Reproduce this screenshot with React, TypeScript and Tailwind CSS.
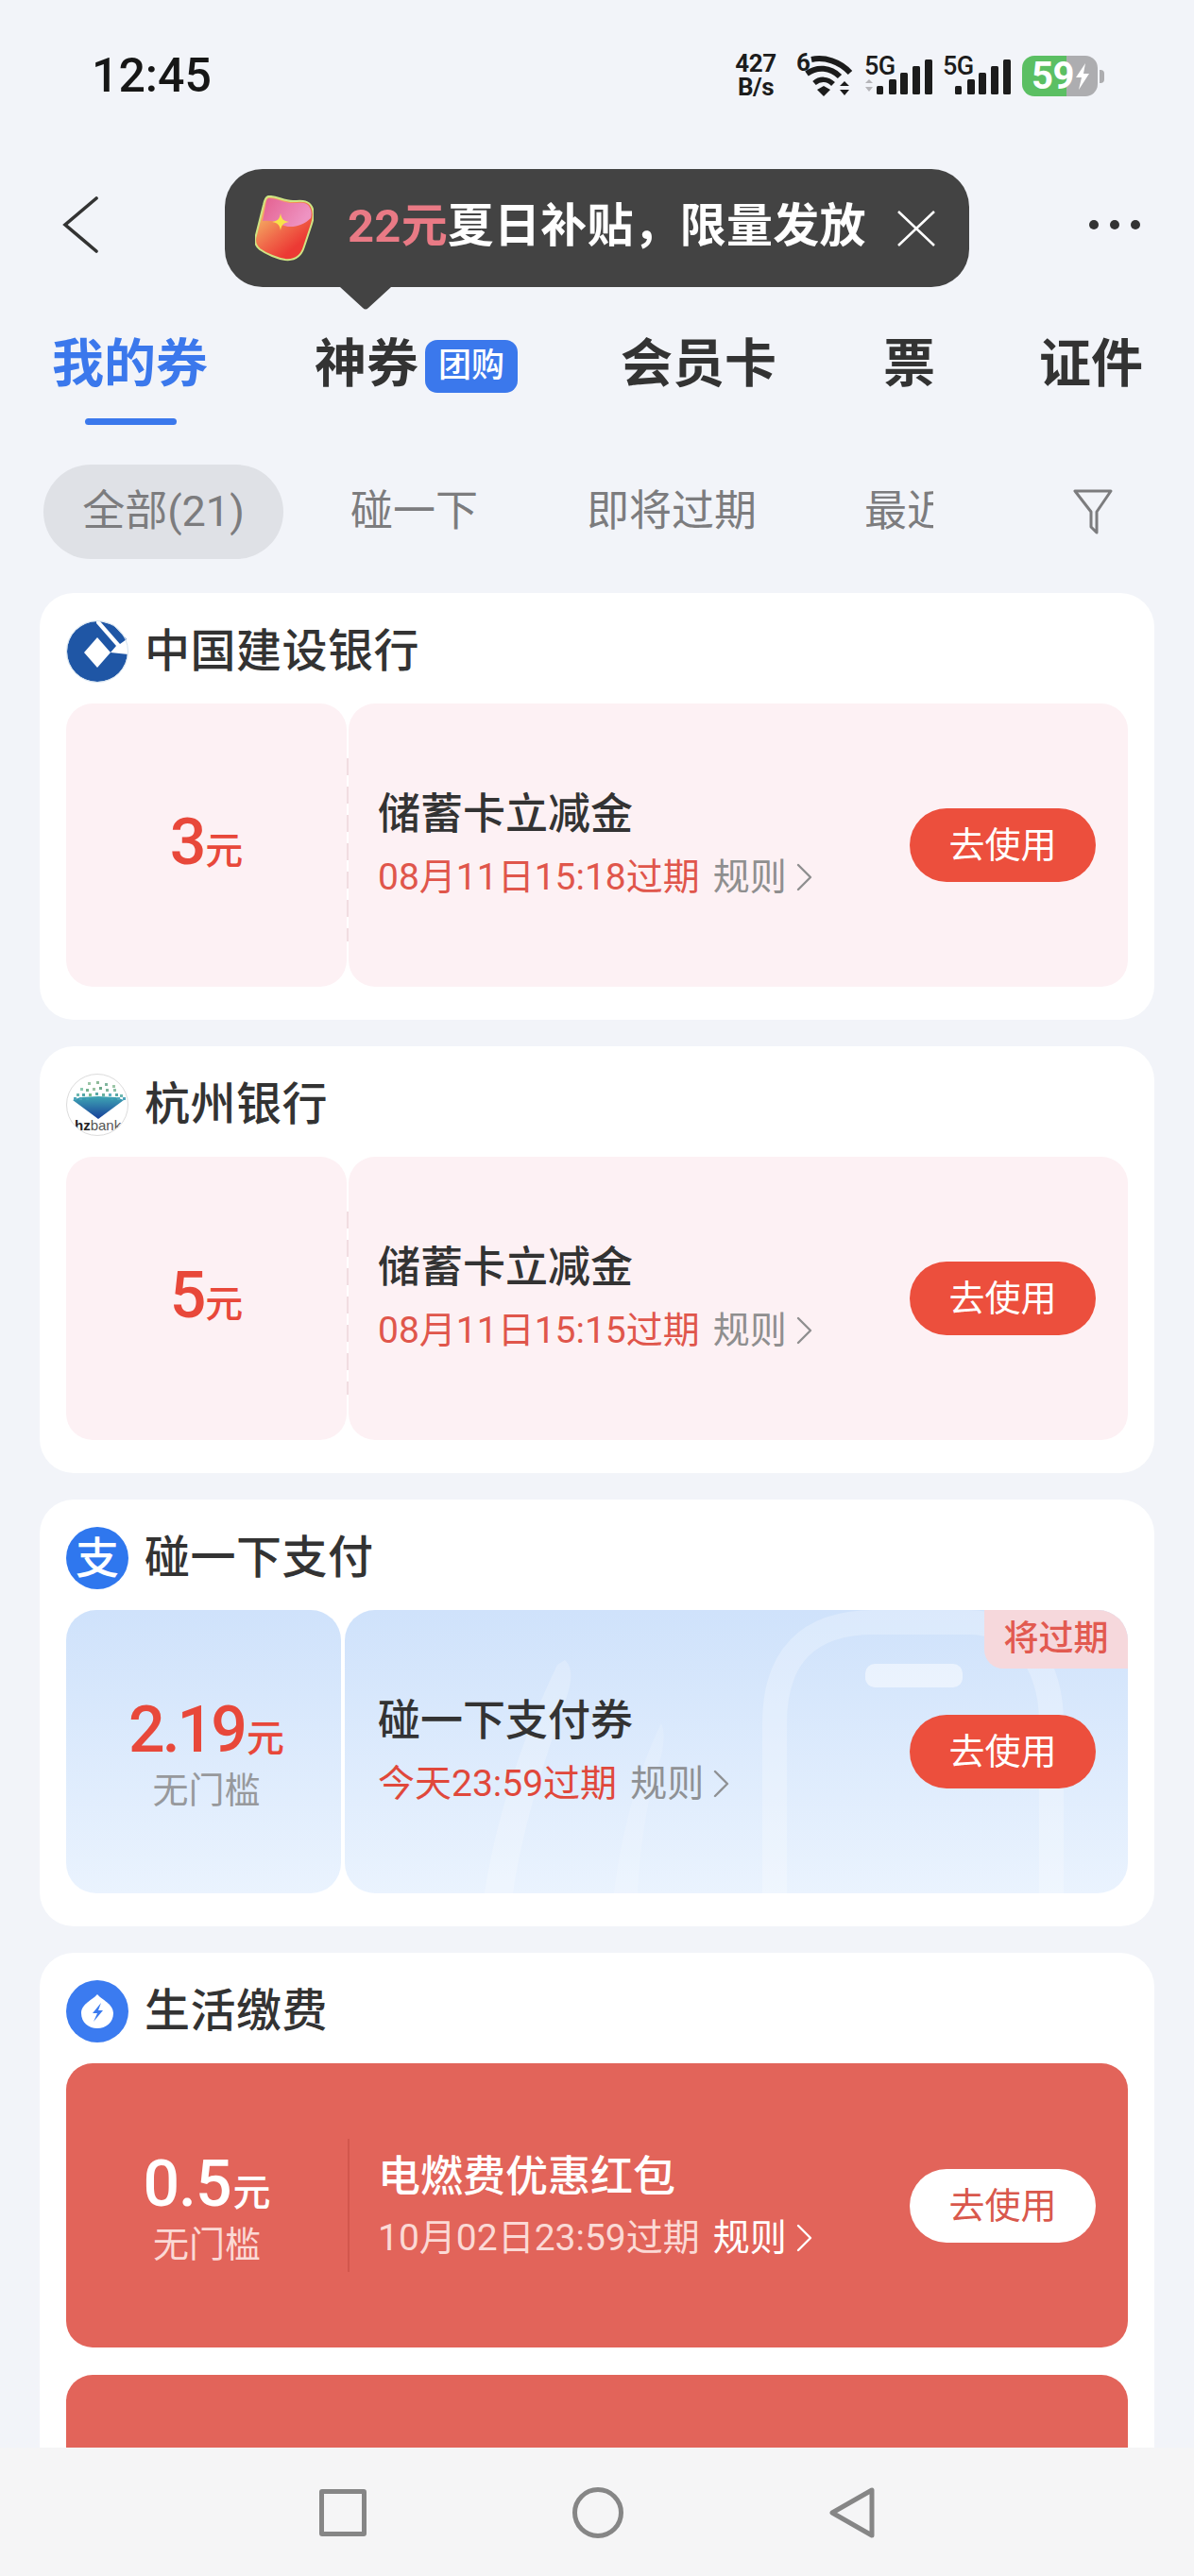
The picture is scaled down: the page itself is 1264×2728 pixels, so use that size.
import React from "react";

const FONT = "font-['Roboto','Noto_Sans_CJK_SC',sans-serif]";

function Chevron({ className }: { className: string }) {
  return (
    <svg viewBox="0 0 20 30" className={className} fill="none" stroke="currentColor" strokeWidth="2.4" strokeLinecap="round" strokeLinejoin="round">
      <path d="M4 2 L17 15 L4 28" />
    </svg>
  );
}

function Bars({ arrows }: { arrows?: boolean }) {
  return (
    <div className="relative w-[72px] h-[44px]">
      <span className="absolute left-0 top-[-2px] text-[27px] leading-[27px] font-medium text-[#1c1c1c] tracking-[-0.5px]">5G</span>
      <svg viewBox="0 0 72 44" className="absolute inset-0 w-[72px] h-[44px]">
        {arrows && <path d="M1 29 L5 25 L9 29 Z M1 33 L9 33 L5 38 Z" fill="#b5b5b9" />}
        <rect x="13" y="32" width="7" height="9" rx="1.5" fill="#1c1c1c" />
        <rect x="26" y="25" width="8" height="16" rx="1.5" fill="#1c1c1c" />
        <rect x="38" y="18" width="8" height="23" rx="1.5" fill="#1c1c1c" />
        <rect x="51" y="11" width="8" height="30" rx="1.5" fill="#1c1c1c" />
        <rect x="64" y="4" width="8" height="37" rx="1.5" fill="#1c1c1c" />
      </svg>
    </div>
  );
}

function StatusBar() {
  return (
    <div className="h-[160px] flex items-center justify-between pl-[97px] pr-[94px]">
      <span className="text-[50px] leading-[50px] font-medium text-[#161616]">12:45</span>
      <div className="flex items-center">
        <div className="flex flex-col items-center w-[50px] text-[#1c1c1c] font-bold text-[26px] leading-[25px] tracking-[-0.5px]">
          <span>427</span>
          <span>B/s</span>
        </div>
        <div className="relative w-[60px] h-[46px] ml-[18px]">
          <span className="absolute left-0 top-[-5px] text-[26px] leading-[28px] font-bold text-[#1c1c1c]">6</span>
          <svg viewBox="0 0 60 46" className="absolute inset-0 w-[60px] h-[46px]" fill="none">
            <path d="M16 6 C30 3 46 8 57 20" stroke="#1c1c1c" strokeWidth="6" />
            <path d="M11 21 C22 13 36 14 46 24" stroke="#1c1c1c" strokeWidth="6" />
            <path d="M19 31 C25 26 33 26 39 32" stroke="#1c1c1c" strokeWidth="5.5" />
            <path d="M22 38 L29 34 L36 38 L29 45 Z" fill="#1c1c1c" />
            <path d="M46 34 L51 29 L56 34 Z M46 38 L56 38 L51 44 Z" fill="#1c1c1c" />
          </svg>
        </div>
        <div className="ml-[12px] mt-[2px]"><Bars arrows /></div>
        <div className="ml-[11px] mt-[2px]"><Bars /></div>
        <div className="relative ml-[12px] w-[88px] h-[43px]">
          <div className="flex w-[80px] h-[43px] rounded-[13px] overflow-hidden">
            <div className="w-[47px] bg-[#5bbf63]" />
            <div className="flex-1 bg-[#adadb0]" />
          </div>
          <span className="absolute left-[10px] top-[-1px] text-[40px] leading-[45px] font-bold text-white tracking-[-0.5px]">59</span>
          <svg viewBox="0 0 20 30" className="absolute left-[54px] top-[7px] w-[20px] h-[30px]">
            <path d="M13 1 L3 16 L9 16 L6 29 L17 12 L11 12 Z" fill="#fff" />
          </svg>
          <div className="absolute left-[82px] top-[15px] w-[5px] h-[14px] rounded-r-[4px] bg-[#adadb0]" />
        </div>
      </div>
    </div>
  );
}

function RedPacket() {
  return (
    <svg viewBox="0 0 62 70" className="w-[62px] h-[70px] shrink-0">
      <defs>
        <linearGradient id="rpBody" x1="0.1" y1="0.3" x2="0.55" y2="0.9">
          <stop offset="0" stopColor="#f4ad62" />
          <stop offset="0.55" stopColor="#f0694a" />
          <stop offset="1" stopColor="#ec3a34" />
        </linearGradient>
        <linearGradient id="rpFlap" x1="0" y1="0" x2="1" y2="0.4">
          <stop offset="0" stopColor="#e4608f" />
          <stop offset="1" stopColor="#ee93c2" />
        </linearGradient>
      </defs>
      <path d="M14 1 C22 0 30 6 40 6 C48 6 56 4 60 12 C63 18 62 24 60 30 L52 54 C49 64 42 69 32 68 C24 67 12 62 5 57 C0 53 -1 48 1 42 L9 10 C10 5 11 2 14 1 Z" fill="url(#rpBody)" stroke="#cfe584" strokeWidth="2" />
      <path d="M14 3 C22 2 30 8 40 8 C48 8 55 6 58 13 C60 17 60 20 59 24 C50 33 35 36 27 30 C22 28 17 26 8 27 L11 11 C12 6 12 4 14 3 Z" fill="url(#rpFlap)" />
      <path d="M27 19 C28 25 30 27 36 28 C30 29 28 31 27 37 C26 31 24 29 18 28 C24 27 26 25 27 19 Z" fill="#f8e34a" />
    </svg>
  );
}

function Tooltip() {
  return (
    <div className="absolute left-[238px] top-[179px] z-10 w-[788px] h-[125px] rounded-[40px] bg-[#434343] flex items-center pl-[32px]">
      <RedPacket />
      <span className="ml-[36px] text-[49px] leading-[60px] font-bold whitespace-nowrap text-white mt-[-4px] tracking-[0.2px]">
        <span className="text-[#e97a85]">22元</span>夏日补贴，限量发放
      </span>
      <svg viewBox="0 0 40 38" className="absolute left-[712px] top-[44px] w-[40px] h-[38px]" stroke="#fff" strokeWidth="2.6" fill="none">
        <path d="M1 1 L39 37 M39 1 L1 37" />
      </svg>
      <svg viewBox="0 0 54 24" className="absolute left-[122px] top-[125px] w-[54px] h-[24px]">
        <path d="M0 0 H54 L30 22 Q27 25 24 22 Z" fill="#434343" />
      </svg>
    </div>
  );
}

function NavBar() {
  return (
    <div className="h-[156px] flex items-center justify-between pl-[66px] pr-[57px]">
      <svg viewBox="0 0 38 60" className="w-[38px] h-[60px] text-[#333]" fill="none" stroke="currentColor" strokeWidth="3.6" strokeLinecap="round">
        <path d="M36 2 L3 30 L36 58" />
      </svg>
      <div className="flex gap-[12px]">
        <div className="w-[10px] h-[10px] rounded-full bg-[#333]" />
        <div className="w-[10px] h-[10px] rounded-full bg-[#333]" />
        <div className="w-[10px] h-[10px] rounded-full bg-[#333]" />
      </div>
    </div>
  );
}

function Tabs() {
  return (
    <div className="h-[176px] flex pl-[55px] pt-[39px] text-[55px] leading-[60px] font-bold text-[#333]">
      <div className="relative w-[166px] whitespace-nowrap text-[#3b78ec]">
        我的券
        <div className="absolute left-[35px] top-[88px] w-[97px] h-[7px] rounded-full bg-[#3b78ec]" />
      </div>
      <div className="ml-[112px] w-[110px] whitespace-nowrap">神券</div>
      <div className="ml-[7px] mt-[5px] w-[98px] h-[56px] rounded-[13px] bg-[#3b78ec] text-white text-[35px] leading-[56px] font-medium text-center">团购</div>
      <div className="ml-[109px] whitespace-nowrap">会员卡</div>
      <div className="ml-[113px] whitespace-nowrap">票</div>
      <div className="ml-[110px] whitespace-nowrap">证件</div>
    </div>
  );
}

function Filters() {
  return (
    <div className="h-[100px] shrink-0 flex items-center pl-[46px] text-[45px] leading-[60px] text-[#7c7c7e]">
      <div className="w-[254px] h-[100px] rounded-full bg-[#dfe1e6] flex items-center justify-center whitespace-nowrap">全部(21)</div>
      <div className="ml-[71px] whitespace-nowrap">碰一下</div>
      <div className="ml-[115px] whitespace-nowrap">即将过期</div>
      <div className="ml-[114px] w-[73px] overflow-hidden whitespace-nowrap">最近</div>
      <svg viewBox="0 0 42 50" className="ml-[148px] w-[42px] h-[50px]" fill="none" stroke="#7c7c7e" strokeWidth="3" strokeLinejoin="round">
        <path d="M2 3 H40 L25 25 V47 L19 41 V25 Z" />
      </svg>
    </div>
  );
}

function CcbLogo() {
  return (
    <svg viewBox="0 0 66 66" className="w-[66px] h-[66px] shrink-0">
      <circle cx="33" cy="33" r="32" fill="#1f56a5" />
      <path d="M32 3 L53 27 L47 34 L66 36 L66 0 L32 0 Z" fill="#fff" />
      <path d="M36 1 L50 5 L64 20 L57 25 Z" fill="#1f56a5" />
      <path d="M33 18 L47 34 L33 50 L19 34 Z" fill="#fff" />
      <circle cx="33" cy="33" r="32.5" fill="none" stroke="#d5e3ef" strokeWidth="1" />
    </svg>
  );
}

function HzLogo() {
  const dots = [
    [22, 8, "#9cc7a8"], [31, 7, "#8fbb9a"], [40, 9, "#7fb59d"], [48, 11, "#9cc7a8"],
    [14, 14, "#8cc9b0"], [20, 15, "#76b08f"], [27, 14, "#9bc2a2"], [34, 13, "#6ea98a"], [41, 15, "#7fb59d"], [49, 15, "#8dc0a8"],
    [10, 20, "#6cb6b0"], [16, 20, "#54a7a8"], [23, 20, "#79b98f"], [30, 19, "#5aa9a5"], [37, 20, "#6ab0a0"], [44, 20, "#5eb1c0"], [51, 20, "#5aa9a5"], [56, 21, "#6cb6b0"],
    [7, 24, "#4ea5bb"], [13, 24, "#4ea5bb"], [20, 24, "#3f9fb5"], [46, 24, "#3f9fb5"], [53, 24, "#4ea5bb"], [59, 24, "#4ea5bb"],
  ] as const;
  return (
    <div className="relative w-[66px] h-[66px] shrink-0 rounded-full bg-white border border-[#dcdcdc] overflow-hidden">
      <svg viewBox="0 0 66 66" className="absolute inset-0 w-[66px] h-[66px]">
        <defs>
          <linearGradient id="hzG" x1="0" y1="0" x2="0" y2="1">
            <stop offset="0" stopColor="#3fa6b4" />
            <stop offset="1" stopColor="#173f9a" />
          </linearGradient>
        </defs>
        <path d="M6 27 L14 24 L33 23 L52 24 L60 27 L33 47 Z" fill="url(#hzG)" />
        {dots.map(([x, y, c], i) => (
          <rect key={i} x={x} y={y} width="3" height="3" fill={c} />
        ))}
      </svg>
      <span className="absolute left-[8px] top-[45px] font-['Liberation_Sans',sans-serif] text-[15px] leading-[17px] whitespace-nowrap text-[#222]">
        <span className="font-bold">hz</span><span className="text-[#555]">bank</span>
      </span>
    </div>
  );
}

function PayLogo() {
  return (
    <div className="w-[66px] h-[66px] shrink-0 rounded-full bg-[#2f77ee] flex items-center justify-center text-white text-[46px] leading-[60px] font-medium">支</div>
  );
}

function LifeLogo() {
  return (
    <svg viewBox="0 0 66 66" className="w-[66px] h-[66px] shrink-0">
      <circle cx="33" cy="33" r="33" fill="#3b7bf0" />
      <path d="M33 15 C38 21 50 25 50 35 C50 45 42 51 33 51 C24 51 16 45 16 35 C16 25 28 21 33 15 Z" fill="#fff" />
      <path d="M37 24 L28 35 L33 35 L29 44 L39 32 L34 32 Z" fill="#3b7bf0" />
    </svg>
  );
}

function Amount({ value, note, valueClass, unitClass, noteClass }: { value: string; note?: string; valueClass: string; unitClass: string; noteClass?: string }) {
  return (
    <div className={`flex flex-col items-center ${note ? "mt-[3px]" : "mt-[-6px]"}`}>
      <div className="flex items-baseline whitespace-nowrap">
        <span className={`text-[68px] leading-[76px] font-medium ${valueClass}`}>{value}</span>
        <span className={`text-[40px] leading-[50px] font-medium ml-[2px] ${unitClass}`}>元</span>
      </div>
      {note && <span className={`text-[38px] leading-[46px] mt-[3px] ${noteClass}`}>{note}</span>}
    </div>
  );
}

function Info({ title, date, titleClass, dateClass, ruleClass }: { title: string; date: string; titleClass: string; dateClass: string; ruleClass: string }) {
  return (
    <div className="flex-1 min-w-0 mt-[-5px]">
      <div className={`text-[45px] leading-[60px] font-medium ${titleClass}`}>{title}</div>
      <div className="mt-[12px] flex items-center text-[39px] leading-[48px] whitespace-nowrap">
        <span className={dateClass}>{date}</span>
        <span className={`ml-[14px] ${ruleClass}`}>规则</span>
        <Chevron className={`ml-[8px] w-[20px] h-[30px] ${ruleClass}`} />
      </div>
    </div>
  );
}

function UseButton({ light }: { light?: boolean }) {
  return (
    <div className={`w-[197px] h-[78px] shrink-0 rounded-full flex items-center justify-center text-[38px] leading-[50px] ${light ? "bg-white text-[#d9584c]" : "bg-[#ec4f3d] text-white"}`}>去使用</div>
  );
}

function PinkCoupon({ amount, date }: { amount: string; date: string }) {
  return (
    <div className="flex h-[300px] gap-[2px]">
      <div className="w-[297px] rounded-[28px] bg-[#fdf1f4] flex items-center justify-center">
        <Amount value={amount} valueClass="text-[#e8483a] tracking-[-3px]" unitClass="text-[#e8483a]" />
      </div>
      <div className="relative flex-1 rounded-[28px] bg-[#fdf1f4] flex items-center pl-[31px] pr-[34px]">
        <div className="absolute left-[-2px] top-[58px] w-[2px] h-[194px] bg-[repeating-linear-gradient(to_bottom,#f1dde1_0,#f1dde1_18px,transparent_18px,transparent_30px)]" />
        <Info title="储蓄卡立减金" date={date} titleClass="text-[#333]" dateClass="text-[#e0564b]" ruleClass="text-[#8f8f8f]" />
        <UseButton />
      </div>
    </div>
  );
}

function BlueCoupon() {
  return (
    <div className="flex h-[300px] gap-[4px]">
      <div className="w-[291px] pl-[6px] rounded-[32px] bg-gradient-to-b from-[#cfe2fb] to-[#eaf3fe] flex items-center justify-center">
        <Amount value="2.19" note="无门槛" valueClass="text-[#e8483a] tracking-[-3px]" unitClass="text-[#e8483a]" noteClass="text-[#97999c]" />
      </div>
      <div className="relative flex-1 overflow-hidden rounded-[32px] bg-gradient-to-b from-[#cfe2fb] to-[#eaf3fe] flex items-center pl-[35px] pr-[34px]">
        <svg viewBox="0 0 829 300" className="absolute inset-0 w-[829px] h-[300px]" fill="none">
          <path d="M455 300 V120 C455 50 490 13 560 13 H660 C710 13 748 50 748 120 V300" stroke="#fff" strokeOpacity="0.25" strokeWidth="26" />
          <rect x="551" y="57" width="103" height="25" rx="10" fill="#fff" fillOpacity="0.5" />
          <path d="M233 53 C243 62 240 80 232 100 C215 150 190 220 178 300 H148 C160 220 190 130 225 58 Z" fill="#fff" fillOpacity="0.22" />
          <path d="M335 120 C340 130 338 150 330 170 C318 210 312 260 310 300 H285 C292 240 310 170 335 120 Z" fill="#fff" fillOpacity="0.15" />
        </svg>
        <div className="relative flex-1 flex items-center">
          <Info title="碰一下支付券" date="今天23:59过期" titleClass="text-[#333]" dateClass="text-[#e0483b]" ruleClass="text-[#8f9194]" />
          <UseButton />
        </div>
        <div className="absolute right-0 top-0 w-[152px] h-[62px] rounded-bl-[20px] bg-[#f6d8dc] flex items-center justify-center text-[37px] leading-[50px] font-medium text-[#e25a50]">将过期</div>
      </div>
    </div>
  );
}

function RedCoupon() {
  return (
    <div className="flex items-center h-[301px] rounded-[28px] bg-[#e2645a]">
      <div className="w-[298px] flex justify-center">
        <Amount value="0.5" note="无门槛" valueClass="text-white tracking-[-1px]" unitClass="text-white" noteClass="text-[#fbd9d5]" />
      </div>
      <div className="w-[2px] h-[141px] bg-[#d2574d]" />
      <div className="flex-1 flex items-center pl-[30px] pr-[34px]">
        <div className="flex-1 min-w-0">
          <div className="text-[45px] leading-[56px] font-medium text-white">电燃费优惠红包</div>
          <div className="mt-[12px] flex items-center text-[39px] leading-[48px] whitespace-nowrap text-[#fbd9d5]">
            <span>10月02日23:59过期</span>
            <span className="ml-[14px] text-white">规则</span>
            <Chevron className="ml-[8px] w-[20px] h-[30px] text-white" />
          </div>
        </div>
        <UseButton light />
      </div>
    </div>
  );
}

function Card({ logo, name, children, tall }: { logo: React.ReactNode; name: string; children: React.ReactNode; tall?: boolean }) {
  return (
    <section className={`shrink-0 rounded-[36px] bg-white px-[28px] pt-[29px] ${tall ? "pb-[35px]" : "h-[452px]"}`}>
      <div className="flex items-center h-[66px] mb-[22px]">
        {logo}
        <span className="ml-[17px] text-[48px] leading-[60px] font-medium text-[#333] tracking-[0.5px]">{name}</span>
      </div>
      {children}
    </section>
  );
}

function BottomBar() {
  return (
    <div className="h-[136px] shrink-0 bg-[#f5f5f6] flex items-center justify-center gap-[218px] relative z-10 pt-[2px]">
      <div className="w-[50px] h-[50px] rounded-[3px] border-[5px] border-[#868686]" />
      <div className="w-[54px] h-[54px] rounded-full border-[5px] border-[#868686]" />
      <svg viewBox="0 0 48 54" className="w-[48px] h-[54px]" fill="none" stroke="#868686" strokeWidth="5" strokeLinejoin="round">
        <path d="M45 3 V51 L3 27 Z" />
      </svg>
    </div>
  );
}

export default function App() {
  return (
    <div className={`relative w-[1264px] h-[2728px] overflow-hidden bg-[#f2f4f9] flex flex-col ${FONT}`}>
      <StatusBar />
      <NavBar />
      <Tooltip />
      <Tabs />
      <Filters />
      <div className="flex-1 min-h-0 overflow-hidden px-[42px] pt-[36px] flex flex-col gap-[28px]">
        <Card logo={<CcbLogo />} name="中国建设银行"><PinkCoupon amount="3" date="08月11日15:18过期" /></Card>
        <Card logo={<HzLogo />} name="杭州银行"><PinkCoupon amount="5" date="08月11日15:15过期" /></Card>
        <Card logo={<PayLogo />} name="碰一下支付"><BlueCoupon /></Card>
        <Card logo={<LifeLogo />} name="生活缴费" tall>
          <div className="flex flex-col gap-[29px]">
            <RedCoupon />
            <div className="h-[301px] rounded-[28px] bg-[#e2645a]" />
          </div>
        </Card>
      </div>
      <BottomBar />
    </div>
  );
}
